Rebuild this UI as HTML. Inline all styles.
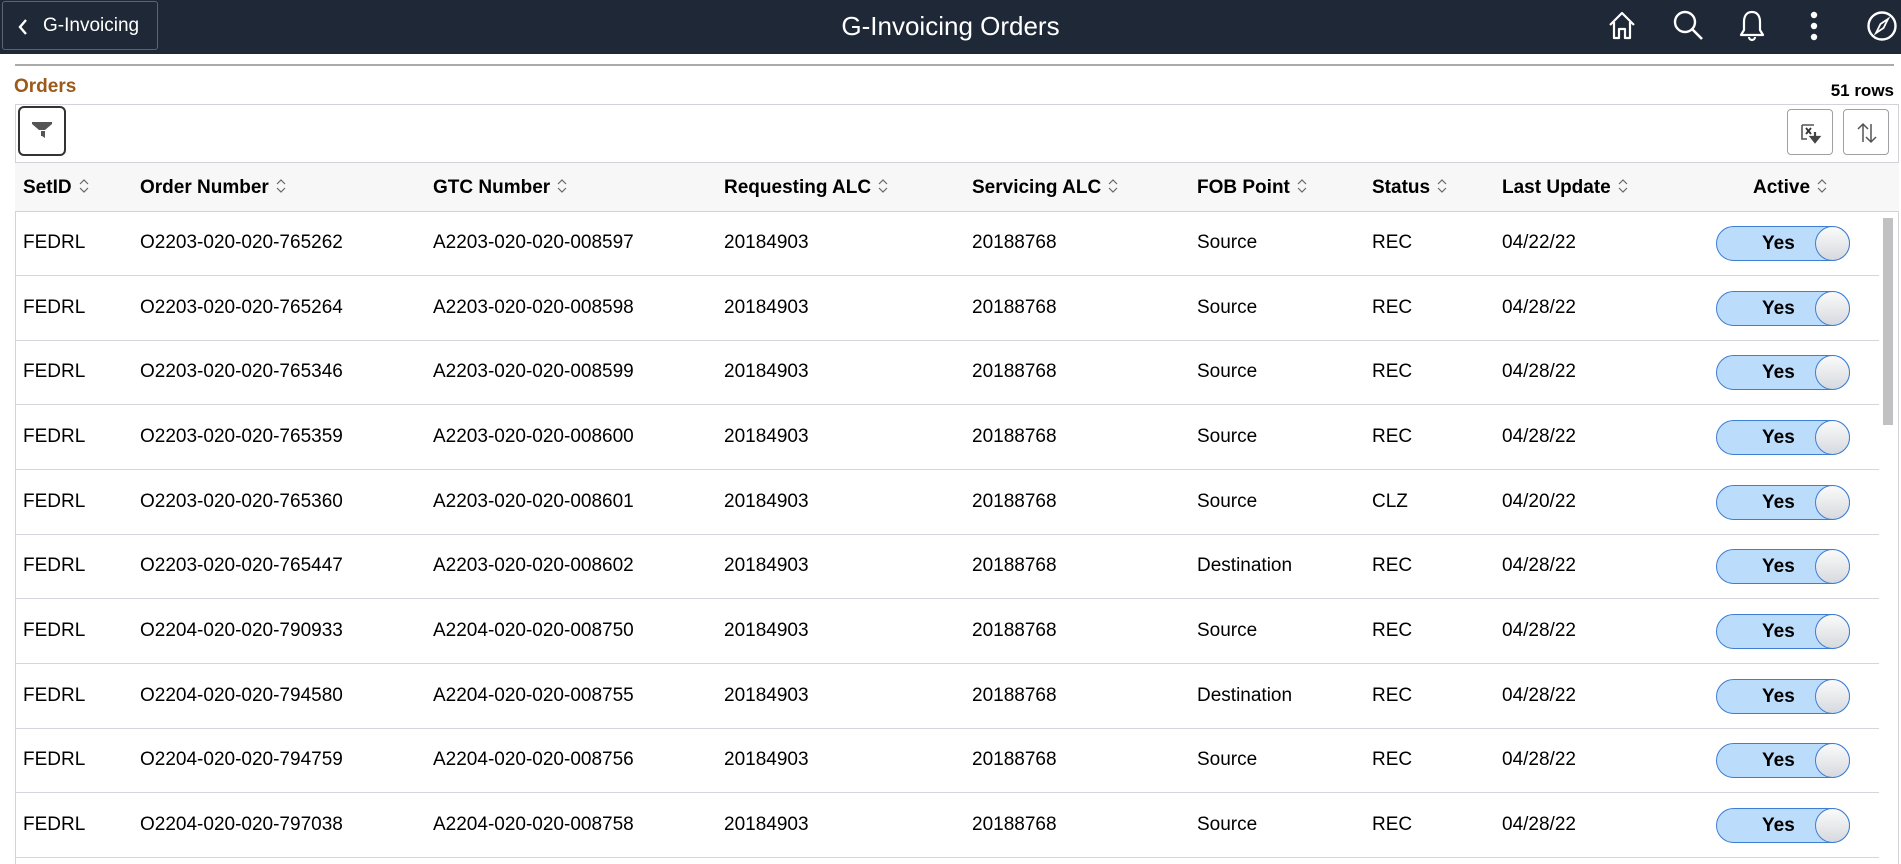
<!DOCTYPE html>
<html><head><meta charset="utf-8">
<style>
*{box-sizing:border-box;margin:0;padding:0}
body{width:1901px;height:857px;overflow:hidden;background:#fff;font-family:"Liberation Sans",Arial,sans-serif;color:#000;position:relative}
.hdr{position:absolute;left:0;top:0;width:1901px;height:54px;background:#1f2837}
.back{position:absolute;left:2px;top:1px;width:156px;height:49px;border:1px solid #5b6470;border-radius:3px;color:#fff;font-size:19px;line-height:47px;padding-left:40px}
.title{position:absolute;left:0;width:1901px;top:0;line-height:52px;text-align:center;color:#fff;font-size:26px}
.ic{position:absolute;top:9px}
.abs{position:absolute}
.hline{position:absolute;left:15px;top:64px;width:1879px;height:2px;background:#aaa}
.orders{position:absolute;left:14px;top:76px;font-size:19px;font-weight:bold;color:#9b5a1a}
.rows{position:absolute;right:7px;top:81px;font-size:17px;font-weight:bold}
.box{position:absolute;left:15px;top:104px;width:1884px;height:760px;border-left:1px solid #d0d4d8;border-top:1px solid #d0d4d8;border-right:1px solid #d0d4d8}
.fbtn{position:absolute;left:18px;top:106px;width:48px;height:50px;border:2px solid #333;border-radius:6px}
.sbtn{position:absolute;top:109px;width:46px;height:46px;border:1px solid #a0a0a0;border-radius:4px}
.thead{position:absolute;left:15px;top:162px;width:1884px;height:50px;background:#f7f7f7;border-top:1px solid #d0d4d8;border-bottom:1px solid #d0d4d8}
.th{position:absolute;top:177px;font-size:19px;font-weight:bold}
.th svg{margin-left:6px;vertical-align:-1px}
.row{position:absolute;left:15px;width:1864px;height:65px;border-bottom:1px solid #d3d6da}
.td{position:absolute;font-size:19px;line-height:63px;top:0}
.tg{position:absolute;left:1701px;top:15px;width:134px;height:35px;border:1px solid #3d7fd3;border-radius:18px;background:#bbdcfa;font-weight:bold;font-size:19px;line-height:33px;padding-left:45px}
.kn{position:absolute;right:-1px;top:-1px;width:35px;height:35px;border-radius:50%;border:1px solid #3d7fd3;background:linear-gradient(#fbfbfb,#d6d9de)}
.sb{position:absolute;left:1883px;top:218px;width:10px;height:207px;background:#c1c1c1}
</style></head><body>
<div class="hdr">
 <div class="back"><svg class="abs" style="left:14px;top:16px" width="12" height="18" viewBox="0 0 12 18"><path d="M9 2 L3 9 L9 16" stroke="#fff" stroke-width="2.4" fill="none"/></svg>G-Invoicing</div>
 <div class="title">G-Invoicing Orders</div>
 <svg class="ic" style="left:1606px" width="32" height="32" viewBox="0 0 32 32"><path d="M4 16 L16 4 L28 16 M8 13 V29 H13 V20 H19 V29 H24 V13" stroke="#fff" stroke-width="2.2" fill="none" stroke-linejoin="round"/></svg>
 <svg class="ic" style="left:1672px" width="34" height="34" viewBox="0 0 34 34"><circle cx="13" cy="13" r="10" stroke="#fff" stroke-width="2.4" fill="none"/><path d="M20 20 L30 30" stroke="#fff" stroke-width="2.6"/></svg>
 <svg class="ic" style="left:1738px" width="28" height="34" viewBox="0 0 28 34"><path d="M14 3 C8 3 6 8 6 13 V21 L3 26 H25 L22 21 V13 C22 8 20 3 14 3 Z M11 28 a3 3 0 0 0 6 0" stroke="#fff" stroke-width="2.2" fill="none" stroke-linejoin="round"/></svg>
 <svg class="ic" style="left:1808px" width="12" height="34" viewBox="0 0 12 34"><circle cx="6" cy="6" r="3.2" fill="#fff"/><circle cx="6" cy="17" r="3.2" fill="#fff"/><circle cx="6" cy="28" r="3.2" fill="#fff"/></svg>
 <svg class="ic" style="left:1866px" width="32" height="34" viewBox="0 0 32 34"><circle cx="16" cy="17" r="13.5" stroke="#fff" stroke-width="2.4" fill="none"/><path d="M22 10 L17.5 19 L10 24 L14.5 15 Z" stroke="#fff" stroke-width="1.8" fill="none"/></svg>
</div>
<div class="hline"></div>
<div class="orders">Orders</div>
<div class="rows">51 rows</div>
<div class="box"></div>
<div class="fbtn"><svg class="abs" style="left:10px;top:12px" width="24" height="24" viewBox="0 0 24 24"><path d="M2 2 H22 V4 L15 10 H9 L2 4 Z" fill="#555"/><path d="M11 11 H15 V18 L12 16 H11 Z" fill="#555"/></svg></div>
<div class="sbtn" style="left:1787px"><svg class="abs" style="left:11px;top:12px" width="24" height="24" viewBox="0 0 24 24"><path d="M3 3 V17 H8 M3 3 H15" stroke="#555" stroke-width="1.6" fill="none"/><path d="M7 6 L12 12 M12 6 L7 12" stroke="#333" stroke-width="1.8"/><path d="M16 10 V19 M12 15 L16 20 L20 15 Z" stroke="#444" stroke-width="2.2" fill="#444"/></svg></div>
<div class="sbtn" style="left:1843px"><svg class="abs" style="left:11px;top:11px" width="24" height="24" viewBox="0 0 24 24"><path d="M8 21 V3 M3 8 L8 3 L13 8 M16 3 V21 M11 16 L16 21 L21 16" stroke="#555" stroke-width="1.5" fill="none"/></svg></div>
<div class="thead"></div>
<div class="th" style="left:23px">SetID<svg width="12" height="16" viewBox="0 0 12 16"><path d="M2 6 L6 2 L10 6 M2 10 L6 14 L10 10" stroke="#666" stroke-width="1.2" fill="none"/></svg></div>
<div class="th" style="left:140px">Order Number<svg width="12" height="16" viewBox="0 0 12 16"><path d="M2 6 L6 2 L10 6 M2 10 L6 14 L10 10" stroke="#666" stroke-width="1.2" fill="none"/></svg></div>
<div class="th" style="left:433px">GTC Number<svg width="12" height="16" viewBox="0 0 12 16"><path d="M2 6 L6 2 L10 6 M2 10 L6 14 L10 10" stroke="#666" stroke-width="1.2" fill="none"/></svg></div>
<div class="th" style="left:724px">Requesting ALC<svg width="12" height="16" viewBox="0 0 12 16"><path d="M2 6 L6 2 L10 6 M2 10 L6 14 L10 10" stroke="#666" stroke-width="1.2" fill="none"/></svg></div>
<div class="th" style="left:972px">Servicing ALC<svg width="12" height="16" viewBox="0 0 12 16"><path d="M2 6 L6 2 L10 6 M2 10 L6 14 L10 10" stroke="#666" stroke-width="1.2" fill="none"/></svg></div>
<div class="th" style="left:1197px">FOB Point<svg width="12" height="16" viewBox="0 0 12 16"><path d="M2 6 L6 2 L10 6 M2 10 L6 14 L10 10" stroke="#666" stroke-width="1.2" fill="none"/></svg></div>
<div class="th" style="left:1372px">Status<svg width="12" height="16" viewBox="0 0 12 16"><path d="M2 6 L6 2 L10 6 M2 10 L6 14 L10 10" stroke="#666" stroke-width="1.2" fill="none"/></svg></div>
<div class="th" style="left:1502px">Last Update<svg width="12" height="16" viewBox="0 0 12 16"><path d="M2 6 L6 2 L10 6 M2 10 L6 14 L10 10" stroke="#666" stroke-width="1.2" fill="none"/></svg></div>
<div class="th" style="left:1753px">Active<svg width="12" height="16" viewBox="0 0 12 16"><path d="M2 6 L6 2 L10 6 M2 10 L6 14 L10 10" stroke="#666" stroke-width="1.2" fill="none"/></svg></div>

<div class="row" style="top:211px"><div class="td" style="left:8px">FEDRL</div><div class="td" style="left:125px">O2203-020-020-765262</div><div class="td" style="left:418px">A2203-020-020-008597</div><div class="td" style="left:709px">20184903</div><div class="td" style="left:957px">20188768</div><div class="td" style="left:1182px">Source</div><div class="td" style="left:1357px">REC</div><div class="td" style="left:1487px">04/22/22</div><div class="tg">Yes<div class="kn"></div></div></div>
<div class="row" style="top:276px"><div class="td" style="left:8px">FEDRL</div><div class="td" style="left:125px">O2203-020-020-765264</div><div class="td" style="left:418px">A2203-020-020-008598</div><div class="td" style="left:709px">20184903</div><div class="td" style="left:957px">20188768</div><div class="td" style="left:1182px">Source</div><div class="td" style="left:1357px">REC</div><div class="td" style="left:1487px">04/28/22</div><div class="tg">Yes<div class="kn"></div></div></div>
<div class="row" style="top:340px"><div class="td" style="left:8px">FEDRL</div><div class="td" style="left:125px">O2203-020-020-765346</div><div class="td" style="left:418px">A2203-020-020-008599</div><div class="td" style="left:709px">20184903</div><div class="td" style="left:957px">20188768</div><div class="td" style="left:1182px">Source</div><div class="td" style="left:1357px">REC</div><div class="td" style="left:1487px">04/28/22</div><div class="tg">Yes<div class="kn"></div></div></div>
<div class="row" style="top:405px"><div class="td" style="left:8px">FEDRL</div><div class="td" style="left:125px">O2203-020-020-765359</div><div class="td" style="left:418px">A2203-020-020-008600</div><div class="td" style="left:709px">20184903</div><div class="td" style="left:957px">20188768</div><div class="td" style="left:1182px">Source</div><div class="td" style="left:1357px">REC</div><div class="td" style="left:1487px">04/28/22</div><div class="tg">Yes<div class="kn"></div></div></div>
<div class="row" style="top:470px"><div class="td" style="left:8px">FEDRL</div><div class="td" style="left:125px">O2203-020-020-765360</div><div class="td" style="left:418px">A2203-020-020-008601</div><div class="td" style="left:709px">20184903</div><div class="td" style="left:957px">20188768</div><div class="td" style="left:1182px">Source</div><div class="td" style="left:1357px">CLZ</div><div class="td" style="left:1487px">04/20/22</div><div class="tg">Yes<div class="kn"></div></div></div>
<div class="row" style="top:534px"><div class="td" style="left:8px">FEDRL</div><div class="td" style="left:125px">O2203-020-020-765447</div><div class="td" style="left:418px">A2203-020-020-008602</div><div class="td" style="left:709px">20184903</div><div class="td" style="left:957px">20188768</div><div class="td" style="left:1182px">Destination</div><div class="td" style="left:1357px">REC</div><div class="td" style="left:1487px">04/28/22</div><div class="tg">Yes<div class="kn"></div></div></div>
<div class="row" style="top:599px"><div class="td" style="left:8px">FEDRL</div><div class="td" style="left:125px">O2204-020-020-790933</div><div class="td" style="left:418px">A2204-020-020-008750</div><div class="td" style="left:709px">20184903</div><div class="td" style="left:957px">20188768</div><div class="td" style="left:1182px">Source</div><div class="td" style="left:1357px">REC</div><div class="td" style="left:1487px">04/28/22</div><div class="tg">Yes<div class="kn"></div></div></div>
<div class="row" style="top:664px"><div class="td" style="left:8px">FEDRL</div><div class="td" style="left:125px">O2204-020-020-794580</div><div class="td" style="left:418px">A2204-020-020-008755</div><div class="td" style="left:709px">20184903</div><div class="td" style="left:957px">20188768</div><div class="td" style="left:1182px">Destination</div><div class="td" style="left:1357px">REC</div><div class="td" style="left:1487px">04/28/22</div><div class="tg">Yes<div class="kn"></div></div></div>
<div class="row" style="top:728px"><div class="td" style="left:8px">FEDRL</div><div class="td" style="left:125px">O2204-020-020-794759</div><div class="td" style="left:418px">A2204-020-020-008756</div><div class="td" style="left:709px">20184903</div><div class="td" style="left:957px">20188768</div><div class="td" style="left:1182px">Source</div><div class="td" style="left:1357px">REC</div><div class="td" style="left:1487px">04/28/22</div><div class="tg">Yes<div class="kn"></div></div></div>
<div class="row" style="top:793px"><div class="td" style="left:8px">FEDRL</div><div class="td" style="left:125px">O2204-020-020-797038</div><div class="td" style="left:418px">A2204-020-020-008758</div><div class="td" style="left:709px">20184903</div><div class="td" style="left:957px">20188768</div><div class="td" style="left:1182px">Source</div><div class="td" style="left:1357px">REC</div><div class="td" style="left:1487px">04/28/22</div><div class="tg">Yes<div class="kn"></div></div></div>
<div class="sb"></div>
</body></html>
